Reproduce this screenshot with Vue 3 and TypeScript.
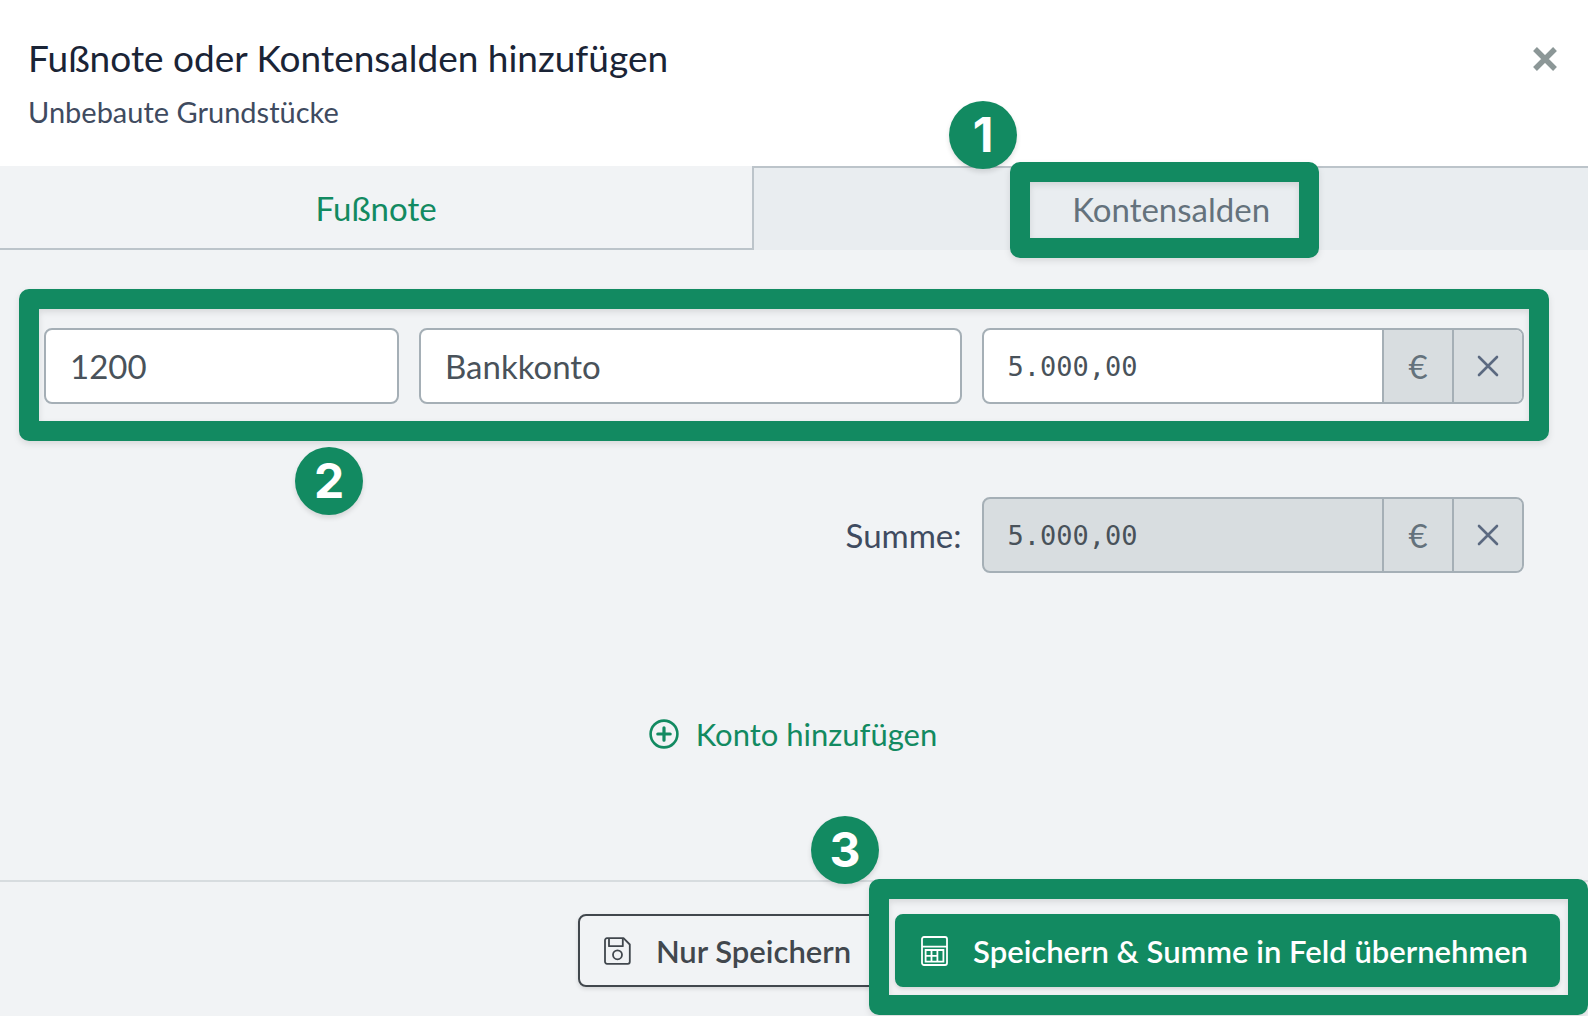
<script setup lang="ts">
import { computed, reactive, ref } from 'vue'

type TabId = 'note' | 'balances'
interface AccountRow {
  id: number
  number: string
  name: string
  amount: string
}

const tabs: { id: TabId; label: string; step?: string }[] = [
  { id: 'note', label: 'Fußnote' },
  { id: 'balances', label: 'Kontensalden', step: '1' },
]
const activeTab = ref<TabId>('note')
const rows = reactive<AccountRow[]>([{ id: 1, number: '1200', name: 'Bankkonto', amount: '5.000,00' }])

const parse = (text: string) => Number(text.replace(/\./g, '').replace(',', '.')) || 0
const total = computed(() =>
  rows
    .reduce((sum, row) => sum + parse(row.amount), 0)
    .toLocaleString('de-DE', { minimumFractionDigits: 2, maximumFractionDigits: 2 }),
)

let nextId = 2
const addRow = () => rows.push({ id: nextId++, number: '', name: '', amount: '' })
const removeRow = (index: number) => rows.splice(index, 1)
</script>

<template>
  <section class="dialog" role="dialog" aria-labelledby="dialog-title">
    <header class="head">
      <div>
        <h1 id="dialog-title" class="title">Fußnote oder Kontensalden hinzufügen</h1>
        <p class="subtitle">Unbebaute Grundstücke</p>
      </div>
      <button class="close" type="button" aria-label="Schließen">
        <svg width="24" height="24" viewBox="0 0 24 24"><path d="M2 2 22 22M22 2 2 22" stroke="currentColor" stroke-width="5.4" /></svg>
      </button>
    </header>

    <nav class="tabs" role="tablist">
      <button
        v-for="tab in tabs"
        :key="tab.id"
        class="tab"
        :class="{ active: tab.id === activeTab }"
        type="button"
        role="tab"
        :aria-selected="tab.id === activeTab"
        @click="activeTab = tab.id"
      >
        <span class="tab-label">
          {{ tab.label }}
          <span v-if="tab.step" class="frame frame-tab"></span>
          <span v-if="tab.step" class="badge badge-tab">{{ tab.step }}</span>
        </span>
      </button>
    </nav>

    <main class="body">
      <div class="rows">
        <div v-for="(row, index) in rows" :key="row.id" class="row">
          <input v-model="row.number" class="field" type="text" aria-label="Kontonummer" />
          <input v-model="row.name" class="field" type="text" aria-label="Kontoname" />
          <div class="group">
            <input v-model="row.amount" class="amount" type="text" aria-label="Betrag" />
            <span class="addon">€</span>
            <button class="addon remove" type="button" aria-label="Zeile entfernen" @click="removeRow(index)">
              <svg width="22" height="22" viewBox="0 0 22 22"><path d="M2 2 20 20M20 2 2 20" /></svg>
            </button>
          </div>
        </div>
        <span class="frame frame-rows"></span>
        <span class="badge badge-rows">2</span>
      </div>

      <div class="row sum">
        <label class="sum-label" for="sum">Summe:</label>
        <div class="group locked">
          <input id="sum" class="amount" type="text" :value="total" readonly />
          <span class="addon">€</span>
          <button class="addon remove" type="button" aria-label="Summe leeren">
            <svg width="22" height="22" viewBox="0 0 22 22"><path d="M2 2 20 20M20 2 2 20" /></svg>
          </button>
        </div>
      </div>

      <button class="add" type="button" @click="addRow">
        <svg width="30" height="30" viewBox="0 0 30 30" fill="none" stroke="currentColor" stroke-linecap="round">
          <circle cx="15" cy="15" r="13.4" stroke-width="2.6" />
          <path d="M15 8.8v12.4M8.8 15h12.4" stroke-width="3.2" />
        </svg>
        Konto hinzufügen
      </button>
    </main>

    <footer class="foot">
      <button class="btn outline" type="button">
        <svg width="27" height="28" viewBox="0 0 27 28" fill="none" stroke="currentColor" stroke-width="1.8" stroke-linejoin="round">
          <path d="M3 1.2h16.5l6.3 6.3V24.8a2 2 0 0 1-2 2H3a2 2 0 0 1-2-2V3.2a2 2 0 0 1 2-2Z" />
          <path d="M5 1.5v7.7h13.800V1.5" />
          <circle cx="13.5" cy="17.8" r="4.5" />
        </svg>
        Nur Speichern
      </button>
      <div class="primary-wrap">
        <button class="btn primary" type="button">
          <svg width="27" height="30" viewBox="0 0 27 30" fill="none" stroke="currentColor" stroke-width="1.8">
            <rect x="1" y="1" width="25" height="28" rx="2" />
            <path d="M1 10.6h25M4.6 14h17.8v11.6H4.6ZM10.5 14v11.6M16.4 14v11.6M4.6 19.8h11.8" />
          </svg>
          Speichern &amp; Summe in Feld übernehmen
        </button>
        <span class="frame frame-save"></span>
        <span class="badge badge-save">3</span>
      </div>
    </footer>
  </section>
</template>

<style>
body {
  margin: 0;
}
</style>

<style scoped>
.dialog {
  --green: #128a61;
  --line: #a5afb6;
  display: flex;
  flex-direction: column;
  min-height: 100vh;
  overflow: hidden;
  background: #f1f3f5;
  color: #49525a;
  font-family: Lato, "Noto Sans", sans-serif;
}
.dialog * {
  box-sizing: border-box;
}
button,
input {
  margin: 0;
  font: inherit;
  color: inherit;
}
button {
  cursor: pointer;
}
svg {
  display: block;
  flex: none;
}

.head {
  display: flex;
  justify-content: space-between;
  align-items: flex-start;
  padding: 34px 28px;
  background: #fff;
}
.title {
  margin: 0;
  font-size: 37px;
  line-height: 48px;
  font-weight: 400;
  color: #1a2436;
}
.subtitle {
  margin: 10px 0 0;
  font-size: 29px;
  line-height: 40px;
  color: #3f4b60;
}
.close {
  margin-top: 10px;
  padding: 3px;
  border: 0;
  background: none;
  color: #8c9797;
}

.tabs {
  display: grid;
  grid-template-columns: 9fr 10fr;
}
.tab {
  height: 84px;
  padding: 0;
  border: 0 solid #bcc4ca;
  border-width: 2px 0 0 2px;
  background: #e9edf0;
  font-size: 33px;
  line-height: 40px;
  color: #64727c;
}
.tab.active {
  border-width: 2px 0;
  border-top-color: transparent;
  background: none;
  color: var(--green);
}
.tab-label {
  position: relative;
  display: inline-block;
}

.body {
  display: flex;
  flex: 1;
  flex-direction: column;
  padding: 78px 64px 0 44px;
}
.rows {
  position: relative;
  display: grid;
  gap: 20px;
}
.row {
  display: grid;
  grid-template-columns: calc(25% - 15px) 1fr 1fr;
  gap: 20px;
}
.field,
.group {
  min-width: 0;
  height: 76px;
  border: 2px solid var(--line);
  border-radius: 8px;
  background: #fff;
}
.field {
  padding: 0 24px;
  font-size: 33px;
}
.group {
  display: flex;
  overflow: hidden;
}
.amount {
  flex: 1;
  min-width: 0;
  padding: 0 24px;
  border: 0;
  background: none;
  font-family: "DejaVu Sans Mono", monospace;
  font-size: 27px;
}
.addon {
  display: flex;
  align-items: center;
  justify-content: center;
  flex: none;
  width: 70px;
  padding: 0;
  border: 0 solid var(--line);
  border-left-width: 2px;
  background: #d8dde0;
  font-size: 33px;
  color: #64727c;
}
.remove {
  color: #5b6980;
}
.remove path {
  stroke: currentColor;
  stroke-width: 2.6;
  stroke-linecap: round;
}
.locked {
  background: #d8dde0;
}
.sum {
  align-items: center;
  margin-top: 93px;
}
.sum-label {
  grid-column: 2;
  justify-self: end;
  font-size: 33px;
  color: #3f4b60;
}
.add {
  display: flex;
  align-items: center;
  align-self: center;
  gap: 17px;
  height: 44px;
  margin: 139px 0 124px 18px;
  padding: 0;
  border: 0;
  background: none;
  font-size: 31px;
  color: var(--green);
}

.foot {
  display: flex;
  justify-content: flex-end;
  gap: 12px;
  padding: 32px 28px 29px;
  border-top: 2px solid #d7dcdf;
}
.btn {
  display: flex;
  align-items: center;
  gap: 25px;
  height: 73px;
  padding: 0 30px 0 24px;
  border: 2px solid currentColor;
  border-radius: 8px;
  background: none;
  box-shadow: 0 2px 4px rgba(0, 0, 0, 0.12);
  font-size: 31px;
  font-weight: 600;
  white-space: nowrap;
}
.outline {
  color: #41474d;
}
.primary {
  border-color: var(--green);
  background: var(--green);
  color: #fff;
}
.primary-wrap {
  position: relative;
}

/* Tutorial highlights drawn over the dialog */
.frame {
  position: absolute;
  border: 20px solid var(--green);
  border-radius: 10px;
  filter: drop-shadow(0 3px 3px rgba(0, 0, 0, 0.1));
  pointer-events: none;
}
.frame-tab {
  inset: -27px -49px -29px -62px;
}
.frame-rows {
  inset: -39px -25px -37px;
}
.frame-save {
  inset: -35px -28px -28px -26px;
}
.badge {
  position: absolute;
  width: 68px;
  height: 68px;
  border-radius: 50%;
  background: var(--green);
  box-shadow: 0 3px 5px rgba(0, 0, 0, 0.12);
  font-family: Inter, sans-serif;
  font-size: 48px;
  font-weight: 700;
  line-height: 68px;
  text-align: center;
  color: #fff;
}
.badge-tab {
  top: -88px;
  left: -123px;
}
.badge-rows {
  top: 119px;
  left: 251px;
}
.badge-save {
  top: -98px;
  left: -84px;
}
</style>
